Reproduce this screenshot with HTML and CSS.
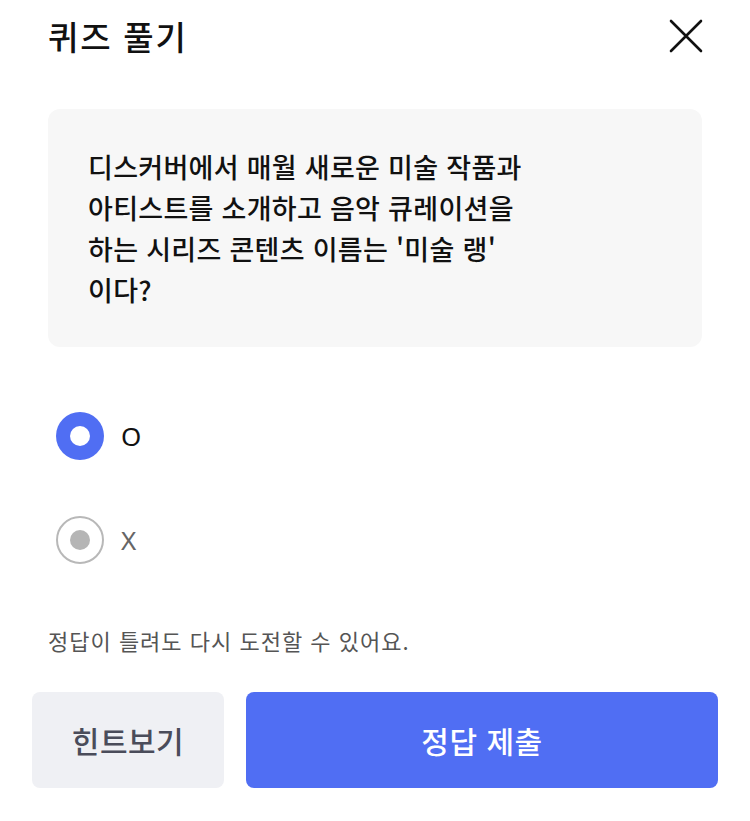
FILE: index.html
```html
<!DOCTYPE html>
<html lang="ko">

<head>
    <meta charset="utf-8">
    <meta name="viewport" content="width=device-width, initial-scale=1.0">
    <title>퀴즈 풀기</title>
    <link rel="stylesheet" href="styles.css">
</head>

<body>

    <header class="top">
        <h1>퀴즈 풀기</h1>
        <button class="luk" aria-label="닫기">
            <svg width="34" height="34" viewBox="0 0 34 34">
                <path d="M2 2 L32 32 M32 2 L2 32" stroke="#111" stroke-width="2.6" fill="none" stroke-linecap="round"/>
            </svg>
        </button>
    </header>

    <section class="spoergsmaal">
        <p>디스커버에서 매월 새로운 미술 작품과<br>아티스트를 소개하고 음악 큐레이션을<br>하는 시리즈 콘텐츠 이름는 '미술 랭'<br>이다?</p>
    </section>

    <div class="svar">
        <label class="valg valgt">
            <span class="radio"></span>
            <span class="tekst">O</span>
        </label>
        <label class="valg">
            <span class="radio"></span>
            <span class="tekst">X</span>
        </label>
    </div>

    <p class="note">정답이 틀려도 다시 도전할 수 있어요.</p>

    <footer class="knapper">
        <button class="hint">힌트보기</button>
        <button class="indsend">정답 제출</button>
    </footer>

</body>

</html>
```

FILE: styles.css
```css
body {
    margin: 0;
    font-family: "Noto Sans CJK KR", "Noto Sans", sans-serif;
    color: #111;
    background-color: #fff;
}

.top {
    display: flex;
    justify-content: space-between;
    align-items: center;
    height: 72px;
    padding: 0 47px 0 48px;
}

h1 {
    margin: 0;
    font-size: 33px;
    font-weight: 500;
    letter-spacing: 1.8px;
}

.luk {
    border: none;
    background: none;
    padding: 0;
    width: 34px;
    height: 34px;
}

.luk svg {
    display: block;
}

.spoergsmaal {
    margin: 37px 48px 0;
    padding: 37px 40px;
    background-color: #f7f7f7;
    border-radius: 12px;
}

.spoergsmaal p {
    margin: 0;
    font-size: 27px;
    font-weight: 500;
    line-height: 41px;
    letter-spacing: 0.3px;
}

.svar {
    display: flex;
    flex-direction: column;
    gap: 56px;
    margin: 65px 56px 0;
}

.valg {
    display: flex;
    align-items: center;
    gap: 17px;
    height: 48px;
}

.radio {
    box-sizing: border-box;
    display: flex;
    justify-content: center;
    align-items: center;
    width: 48px;
    height: 48px;
    border-radius: 50%;
    border: 2px solid #b8b8b8;
}

.radio::after {
    content: "";
    width: 20px;
    height: 20px;
    border-radius: 50%;
    background-color: #b5b5b5;
}

.valgt .radio {
    border: none;
    background-color: #506ef3;
}

.valgt .radio::after {
    background-color: #fff;
}

.tekst {
    font-family: "Noto Sans", sans-serif;
    font-size: 26px;
    color: #666;
}

.valgt .tekst {
    color: #111;
}

.note {
    margin: 61px 48px 0;
    font-size: 22px;
    line-height: 30px;
    color: #555;
    letter-spacing: 1px;
}

.knapper {
    display: flex;
    gap: 22px;
    margin: 37px 32px 0;
}

.knapper button {
    height: 96px;
    border: none;
    border-radius: 8px;
    font-family: "Noto Sans CJK KR", sans-serif;
    font-size: 30px;
    font-weight: 500;
    letter-spacing: 0.5px;
}

.hint {
    width: 192px;
    background-color: #eff0f4;
    color: #4a4c5a;
}

.indsend {
    flex: 1;
    background-color: #506ef3;
    color: #fff;
}
```
